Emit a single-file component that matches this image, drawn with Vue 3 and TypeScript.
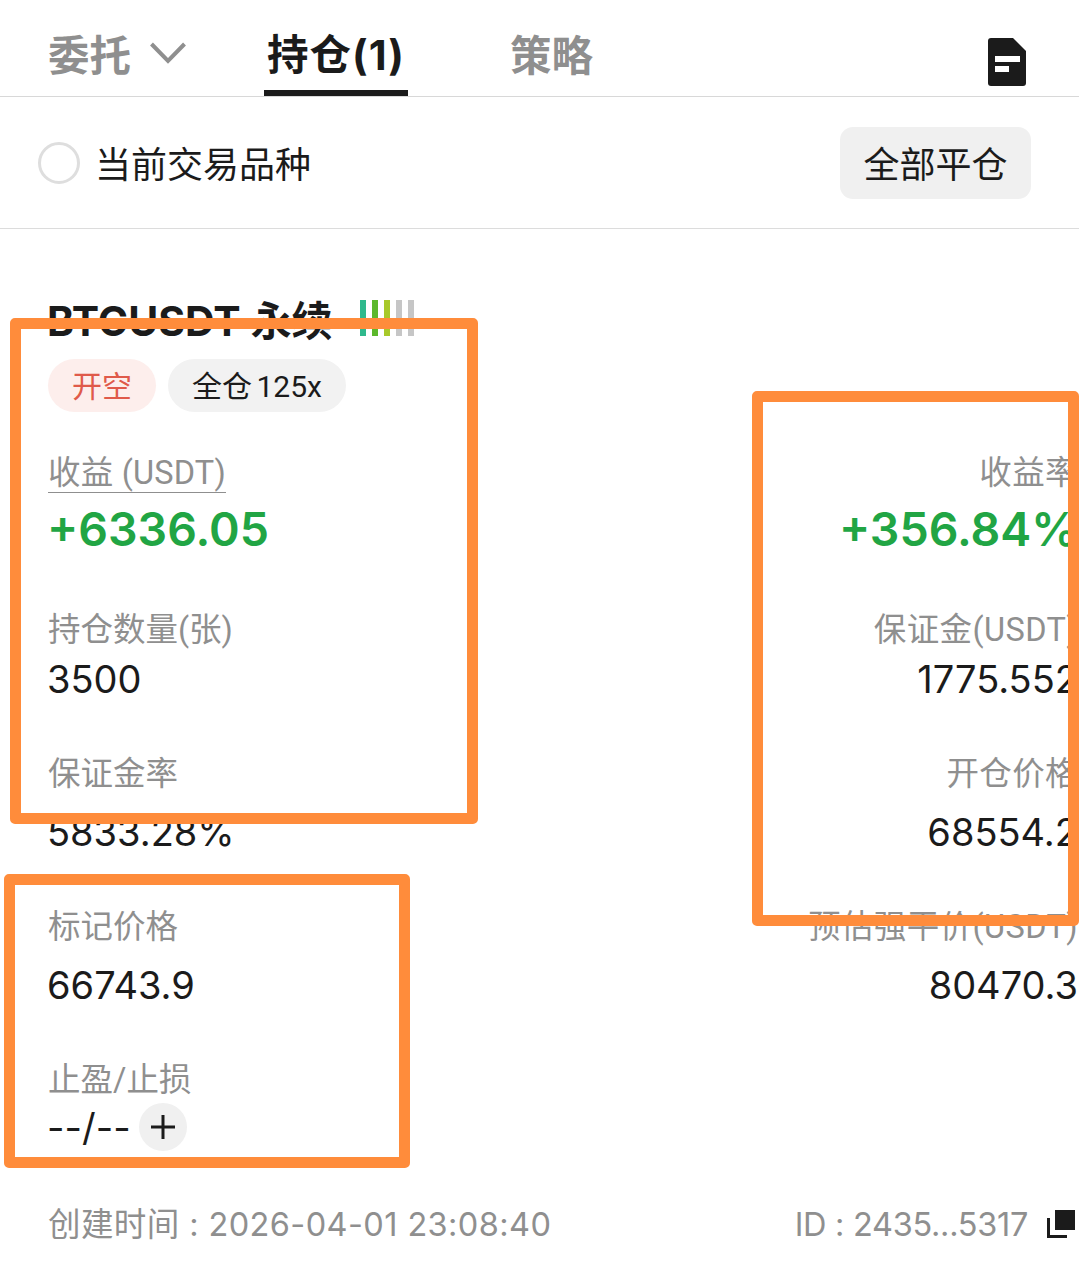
<script setup lang="ts">
interface Field {
  label: string
  value: string
}

interface Row {
  key: string
  left: Field
  right: Field
}

const rows: Row[] = [
  { key: 'margin-size', left: { label: '持仓数量(张)', value: '3500' }, right: { label: '保证金(USDT)', value: '1775.552' } },
  { key: 'ratio', left: { label: '保证金率', value: '5833.28%' }, right: { label: '开仓价格', value: '68554.2' } },
  { key: 'mark', left: { label: '标记价格', value: '66743.9' }, right: { label: '预估强平价(USDT)', value: '80470.3' } },
]

const bars = ['#2fb98c', '#5cb82c', '#a8c92a', '#c6c6c6', '#c6c6c6']
</script>

<template>
  <div class="page">
    <header class="tabs">
      <div class="tab">委托
        <svg class="chevron" viewBox="0 0 36 22" width="36" height="22">
          <path d="M1.5 2 18 19 34.5 2" fill="none" stroke="#8f8f8f" stroke-width="4" />
        </svg>
      </div>
      <div class="tab active">持仓(1)</div>
      <div class="tab">策略</div>
      <svg class="doc" viewBox="0 0 38 48" width="38" height="48">
        <path d="M3 0H25L38 13V45a3 3 0 0 1-3 3H3a3 3 0 0 1-3-3V3a3 3 0 0 1 3-3Z" fill="#1b1b1b" />
        <rect x="7" y="18" width="25" height="6" fill="#fff" />
        <rect x="7" y="28" width="14" height="6" fill="#fff" />
      </svg>
    </header>

    <section class="filter">
      <div class="filter-left">
        <span class="radio"></span>
        <span>当前交易品种</span>
      </div>
      <button class="close-all">全部平仓</button>
    </section>

    <section class="position">
      <div class="title">
        <span>BTCUSDT 永续</span>
        <span class="signal">
          <i v-for="(c, i) in bars" :key="i" :style="{ background: c }"></i>
        </span>
      </div>
      <div class="tags">
        <span class="tag short">开空</span>
        <span class="tag">全仓 125x</span>
      </div>

      <div class="row row-profit">
        <div>
          <div class="label"><span class="dashed">收益 (USDT)</span></div>
          <div class="big">+6336.05</div>
        </div>
        <div class="right">
          <div class="label">收益率</div>
          <div class="big">+356.84%</div>
        </div>
      </div>

      <div v-for="row in rows" :key="row.key" class="row" :class="`row-${row.key}`">
        <div>
          <div class="label">{{ row.left.label }}</div>
          <div class="value">{{ row.left.value }}</div>
        </div>
        <div class="right">
          <div class="label">{{ row.right.label }}</div>
          <div class="value">{{ row.right.value }}</div>
        </div>
      </div>

      <div class="row row-tp">
        <div>
          <div class="label">止盈/止损</div>
          <div class="value tp">
            <span>--/--</span>
            <span class="plus">
              <svg viewBox="0 0 24 24" width="24" height="24">
                <path d="M12 0v24M0 12h24" stroke="#1b1b1b" stroke-width="3" fill="none" />
              </svg>
            </span>
          </div>
        </div>
      </div>

      <footer class="foot">
        <span class="date">创建时间 : 2026-04-01 23:08:40</span>
        <span class="id">
          <span class="id-text">ID : 2435...5317</span>
          <svg class="copy" viewBox="0 0 28 28" width="28" height="28">
            <rect x="8" y="0" width="20" height="20" fill="#1b1b1b" />
            <path d="M1.5 8v18.500h18.500" fill="none" stroke="#1b1b1b" stroke-width="3" />
          </svg>
        </span>
      </footer>
    </section>

    <div class="mark mark-a"></div>
    <div class="mark mark-b"></div>
    <div class="mark mark-c"></div>
  </div>
</template>

<style scoped>
.page {
  position: relative;
  width: 1079px;
  height: 1283px;
  overflow: hidden;
  background: #fff;
  color: #1b1b1b;
  font-family: Inter, "Noto Sans CJK SC", sans-serif;
}

.tabs {
  display: flex;
  align-items: flex-end;
  height: 96px;
  padding-left: 48px;
  border-bottom: 1px solid #d8d8d8;
  position: relative;
}

.tab {
  display: flex;
  align-items: center;
  height: 96px;
  padding-top: 10px;
  box-sizing: border-box;
  font-size: 41.500px;
  font-weight: 700;
  color: #8f8f8f;
}

.chevron {
  margin-left: 19px;
}

.tab.active {
  margin-left: 78px;
  padding: 14px 3px 0;
  letter-spacing: 1px;
  color: #1b1b1b;
  border-bottom: 6px solid #1b1b1b;
}

.tab.active + .tab {
  margin-left: 102px;
}

.doc {
  margin-left: auto;
  margin-right: 53px;
  margin-bottom: 10px;
}

.filter {
  display: flex;
  align-items: center;
  justify-content: space-between;
  height: 131px;
  padding: 0 48px 0 38px;
  border-bottom: 1px solid #dcdcdc;
  font-size: 36px;
}

.filter-left {
  display: flex;
  align-items: center;
  gap: 15px;
}

.filter-left span:last-child {
  margin-top: -2px;
}

.radio {
  width: 42px;
  height: 42px;
  box-sizing: border-box;
  border: 3px solid #dedede;
  border-radius: 50%;
}

.close-all {
  width: 191px;
  height: 72px;
  padding: 0 0 2px;
  border: 0;
  border-radius: 13px;
  background: #f0f0f0;
  color: inherit;
  font: inherit;
}

.position {
  padding: 67px 1px 0 47px;
}

.title {
  display: flex;
  align-items: center;
  gap: 28px;
  height: 44px;
  font-size: 41px;
  font-weight: 700;
}

.signal {
  display: flex;
  gap: 6px;
  height: 36px;
}

.signal i {
  width: 6px;
}

.tags {
  display: flex;
  gap: 12px;
  margin: 19px 0 0 1px;
}

.tag {
  display: flex;
  align-items: center;
  height: 53px;
  padding: 0 24px 3px;
  box-sizing: border-box;
  border-radius: 27px;
  background: #f2f2f2;
  font-family: Roboto, "Noto Sans CJK SC", sans-serif;
  font-size: 30px;
  word-spacing: -3px;
}

.tag.short {
  background: #fdeeec;
  color: #e05a4a;
}

.row {
  display: flex;
  justify-content: space-between;
}

.right {
  text-align: right;
}

.right .label {
  letter-spacing: 0.400px;
}

.label {
  height: 40px;
  line-height: 40px;
  padding-left: 1px;
  font-family: Roboto, "Noto Sans CJK SC", sans-serif;
  font-size: 32.500px;
  color: #8f8f8f;
}

.dashed {
  display: inline-block;
  height: 39px;
  letter-spacing: 0.200px;
  border-bottom: 1px solid #8f8f8f;
}

.big {
  margin-top: 8px;
  line-height: 56px;
  font-size: 46.500px;
  font-weight: 600;
  color: #21a544;
}

.value {
  line-height: 46px;
  font-size: 38px;
}

.row-profit {
  margin-top: 41px;
}

.row-margin-size {
  margin-top: 53px;
}

.row-margin-size .value {
  margin-top: 6px;
}

.row-ratio {
  margin-top: 52px;
}

.row-ratio .value {
  margin-top: 15px;
}

.row-mark {
  margin-top: 52px;
}

.row-mark .value {
  margin-top: 15px;
}

.row-tp {
  margin-top: 52px;
}

.tp {
  display: flex;
  align-items: center;
  gap: 8px;
  margin-top: 3px;
}

.plus {
  display: flex;
  align-items: center;
  justify-content: center;
  width: 48px;
  height: 48px;
  border-radius: 50%;
  background: #f0f0f0;
}

.foot {
  display: flex;
  align-items: center;
  justify-content: space-between;
  margin-top: 54px;
  padding-right: 3px;
  line-height: 40px;
  font-size: 32.500px;
  color: #8f8f8f;
}

.date {
  padding-left: 1px;
  letter-spacing: 0.400px;
}

.id {
  display: flex;
  align-items: center;
  gap: 19px;
}

.id-text {
  letter-spacing: -0.300px;
}

.copy {
  margin-top: -3px;
}

/* orange annotation frames drawn over the screenshot */
.mark {
  position: absolute;
  box-sizing: border-box;
  border: 11px solid #ff8c3b;
  border-radius: 5px;
}

.mark-a {
  left: 10px;
  top: 318px;
  width: 468px;
  height: 506px;
}

.mark-b {
  left: 752px;
  top: 391px;
  width: 327px;
  height: 535px;
}

.mark-c {
  left: 4px;
  top: 874px;
  width: 406px;
  height: 294px;
}
</style>
